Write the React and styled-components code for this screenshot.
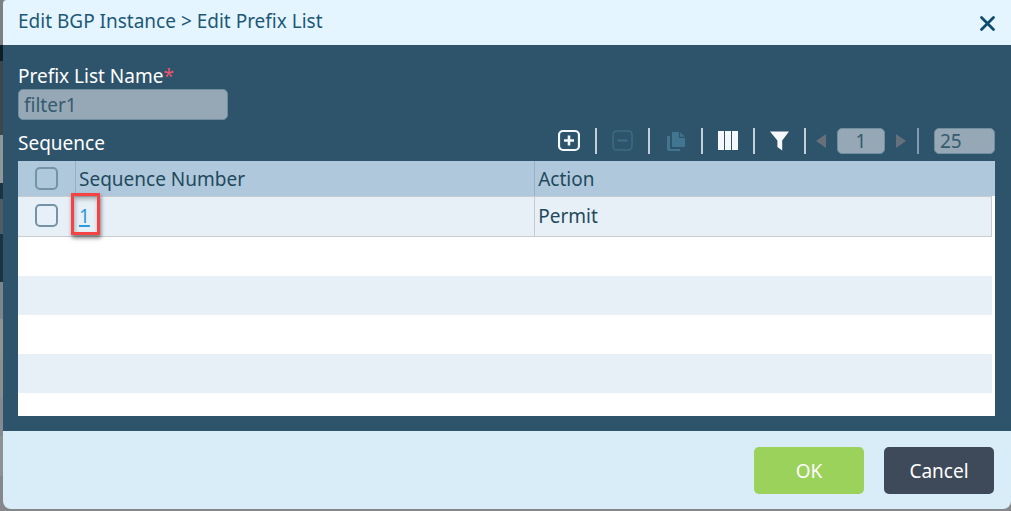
import React, { useState } from 'react';
import styled, { createGlobalStyle, css } from 'styled-components';

const EMPTY_ROWS = ['a', 'b', 'c', 'd'];

const sequences = [{ id: 1, action: 'Permit' }];

// slices of the dimmed page that show beside the dialog
const backdropSlices = [
  { size: 45, color: '#7d8083' },
  { size: 16, color: '#0e1e26' },
  { size: 75, color: '#3e464c' },
  { size: 48, color: '#8f979b' },
  { size: 16, color: '#1c3441' },
  { size: 35, color: '#4f5c66' },
  { size: 48, color: '#1c3441' },
  { size: 37, color: '#7b858b' },
  { size: 40, color: '#909294' },
  { size: 40, color: '#8b8d8f' },
  { size: 38, color: '#858a92' },
  { size: 40, color: '#8e9093' },
  { size: 33, color: '#85878c' },
];

function App() {
  const [name, setName] = useState('filter1');
  const [page, setPage] = useState('1');
  const [pageSize, setPageSize] = useState('25');

  return (
    <>
      <GlobalStyle />
      <Page>
        <Backdrop aria-hidden="true">
          {backdropSlices.map((slice, i) => (
            <Slice key={i} $size={slice.size} $color={slice.color} />
          ))}
        </Backdrop>
        <Dialog role="dialog" aria-labelledby="dialog-title">
          <Header>
            <Title id="dialog-title">Edit BGP Instance &gt; Edit Prefix List</Title>
            <CloseButton type="button" aria-label="Close">
              <svg width="17" height="17" viewBox="0 0 17 17">
                <path d="M2.5 2.5L14.5 14.5M14.5 2.5L2.5 14.5" stroke="#0d4a6b" strokeWidth="2.8" strokeLinecap="round" />
              </svg>
            </CloseButton>
          </Header>

          <Body>
            <Label htmlFor="prefix-name">
              Prefix List Name<Required>*</Required>
            </Label>
            <NameInput id="prefix-name" value={name} onChange={(e) => setName(e.target.value)} />

            <SequenceBar>
              <SectionTitle id="sequence-title">Sequence</SectionTitle>
              <Toolbar>
                <IconButton type="button" aria-label="Add">
                  <svg width="22" height="24" viewBox="0 0 22 24" fill="none" stroke="#f2f8fb">
                    <rect x="1" y="2" width="20" height="19" rx="4" strokeWidth="2.2" />
                    <path d="M11 6.5V16.5M6 11.5H16" strokeWidth="2.6" />
                  </svg>
                </IconButton>
                <Separator />
                <IconButton type="button" aria-label="Remove" disabled>
                  <svg width="21" height="24" viewBox="0 0 21 24" fill="none" stroke="#3c6b84">
                    <rect x="1" y="2" width="19" height="19" rx="4" strokeWidth="1.6" />
                    <path d="M5.5 11.5H15.5" strokeWidth="2.2" />
                  </svg>
                </IconButton>
                <Separator />
                <IconButton type="button" aria-label="Copy" disabled>
                  <svg width="21" height="24" viewBox="0 0 21 24" fill="#42758f">
                    <path d="M8 3H14V9H20V17Q20 18 19 18H8Q7 18 7 17V4Q7 3 8 3Z" />
                    <path d="M15.2 3.2L19.8 7.8H15.2Z" />
                    <path d="M3 7H5V20H15V22H4Q2 22 2 20V8Q2 7 3 7Z" />
                  </svg>
                </IconButton>
                <Separator />
                <IconButton type="button" aria-label="Columns">
                  <svg width="20" height="22" viewBox="0 0 20 22" fill="#f4f8fb">
                    <rect x="0" y="1" width="6" height="19" />
                    <rect x="7" y="1" width="6" height="19" />
                    <rect x="14" y="1" width="6" height="19" />
                  </svg>
                </IconButton>
                <Separator />
                <IconButton type="button" aria-label="Filter">
                  <svg width="19" height="22" viewBox="0 0 19 22" fill="#f6fafc">
                    <path d="M0 1.5H19L12.2 10.5V20.5L7.4 17V10.5Z" />
                  </svg>
                </IconButton>
                <Separator />
                <Pager>
                  <IconButton type="button" aria-label="Previous page" disabled>
                    <svg width="10" height="16" viewBox="0 0 10 16" fill="#66707a">
                      <path d="M10 1V15L0 8Z" />
                    </svg>
                  </IconButton>
                  <PageInput aria-label="Page" value={page} onChange={(e) => setPage(e.target.value)} />
                  <IconButton type="button" aria-label="Next page" disabled>
                    <svg width="10" height="16" viewBox="0 0 10 16" fill="#66707a">
                      <path d="M0 1V15L10 8Z" />
                    </svg>
                  </IconButton>
                </Pager>
                <Separator $dim />
                <SizeInput aria-label="Rows per page" value={pageSize} onChange={(e) => setPageSize(e.target.value)} />
              </Toolbar>
            </SequenceBar>

            <Grid>
              <Table aria-labelledby="sequence-title">
                <colgroup>
                  <CheckCol />
                  <NumberCol />
                  <col />
                  <GutterCol />
                </colgroup>
                <thead>
                  <tr>
                    <HeadCell>
                      <Checkbox type="checkbox" aria-label="Select all" />
                    </HeadCell>
                    <HeadCell>Sequence Number</HeadCell>
                    <HeadCell>Action</HeadCell>
                    <HeadCell aria-hidden="true" />
                  </tr>
                </thead>
                <tbody>
                  {sequences.map((row) => (
                    <tr key={row.id}>
                      <Cell>
                        <Checkbox type="checkbox" aria-label={`Select sequence ${row.id}`} />
                      </Cell>
                      <Cell>
                        <NumberLink href="#sequence">
                          {row.id}
                          <Highlight />
                        </NumberLink>
                      </Cell>
                      <Cell>{row.action}</Cell>
                      <Gutter />
                    </tr>
                  ))}
                  {EMPTY_ROWS.map((key) => (
                    <EmptyRow key={key} aria-hidden="true">
                      <td colSpan={3} />
                      <Gutter />
                    </EmptyRow>
                  ))}
                </tbody>
              </Table>
            </Grid>
          </Body>

          <Footer>
            <ActionButton type="button" $primary>OK</ActionButton>
            <ActionButton type="button">Cancel</ActionButton>
          </Footer>
        </Dialog>
      </Page>
    </>
  );
}
export default App;

const GlobalStyle = createGlobalStyle`
  * {
    box-sizing: border-box;
  }
  body {
    margin: 0;
    background: #85878a;
    color: #1f4a5c;
    font-family: "Noto Sans", "Open Sans", sans-serif;
    font-size: 19px;
    line-height: 26px;
  }
  input, button {
    font: inherit;
  }
`;

const Page = styled.div`
  display: flex;
  padding-bottom: 2px;
`;

const Backdrop = styled.div`
  display: flex;
  flex-direction: column;
  width: 3px;
`;

const Slice = styled.div`
  flex: ${({ $size }) => $size} 0 0;
  background: ${({ $color }) => $color};
`;

const Dialog = styled.div`
  flex: 1;
  min-width: 0;
  border-radius: 4px 0 8px 8px;
  overflow: hidden;
`;

const Header = styled.header`
  display: flex;
  align-items: center;
  justify-content: space-between;
  height: 45px;
  padding: 0 15px 4px;
  background: #e5f5ff;
`;

const Title = styled.h1`
  margin: 0;
  color: #1d5876;
  font-size: 19px;
  font-weight: 400;
`;

const CloseButton = styled.button`
  display: flex;
  margin-top: 6px;
  padding: 0;
  border: none;
  background: none;
  cursor: pointer;
`;

const Body = styled.main`
  padding: 18px 16px 15px 15px;
  background: #2e546b;
`;

const Label = styled.label`
  display: block;
  color: #fff;
`;

const Required = styled.span`
  color: #f0536b;
`;

const fieldStyle = css`
  border: 1px solid #6f8ea0;
  border-radius: 5px;
  background: #96a8b5;
  color: #355b6e;
`;

const NameInput = styled.input`
  display: block;
  width: 210px;
  height: 31px;
  padding: 0 5px;
  ${fieldStyle}
`;

const SequenceBar = styled.div`
  display: flex;
  justify-content: space-between;
  align-items: center;
  height: 41px;
`;

const SectionTitle = styled.h2`
  margin: 4px 0 0;
  color: #fff;
  font-size: 19px;
  font-weight: 400;
`;

const Toolbar = styled.div`
  display: flex;
  align-items: center;
  gap: 15px;
`;

const IconButton = styled.button`
  display: flex;
  padding: 0;
  border: none;
  background: none;
  cursor: ${({ disabled }) => (disabled ? 'default' : 'pointer')};
`;

const Separator = styled.span`
  width: 2px;
  height: 26px;
  background: ${({ $dim }) => ($dim ? '#7f9bad' : '#c3ced6')};
`;

const Pager = styled.div`
  display: flex;
  align-items: center;
  gap: 11px;
  margin: 0 -4px 0 -5px;
`;

const PageInput = styled.input`
  width: 48px;
  height: 26px;
  padding: 0;
  text-align: center;
  ${fieldStyle}
`;

const SizeInput = styled.input`
  width: 61px;
  height: 26px;
  padding: 0 5px;
  ${fieldStyle}
`;

const Grid = styled.div`
  height: 255px;
  overflow: hidden;
  background: #fff;
`;

const Table = styled.table`
  width: 100%;
  table-layout: fixed;
  border-collapse: separate;
  border-spacing: 0;
`;

const CheckCol = styled.col`
  width: 58px;
`;

const NumberCol = styled.col`
  width: 47%;
`;

const GutterCol = styled.col`
  width: 3px;
`;

const HeadCell = styled.th`
  height: 35px;
  padding: 0 3px;
  border-right: 1px solid #96b1c5;
  background: #b0c8dc;
  font-weight: 400;
  text-align: left;

  &:nth-child(n + 3) {
    padding-right: 0;
    border-right: none;
  }
`;

const Cell = styled.td`
  height: 41px;
  padding: 0 3px 2px;
  border: 1px solid #c8cccf;
  border-left: none;
  background: #e7eff7;

  &:first-child {
    border-right-color: #e7eff7;
  }
`;

const Gutter = styled.td`
  padding: 0;
  background: #fff;
`;

const EmptyRow = styled.tr`
  height: 39px;
  background: #fff;

  &:nth-child(odd) {
    background: #e7eff7;
  }
`;

const Checkbox = styled.input`
  appearance: none;
  display: block;
  width: 23px;
  height: 23px;
  margin: 0 0 0 14px;
  border: 2px solid #7593a6;
  border-radius: 5px;
  background: transparent;

  &:checked {
    background: #7593a6;
  }
`;

const NumberLink = styled.a`
  position: relative;
  color: #2a9bdc;
  text-decoration-thickness: 2px;
  text-underline-offset: 2px;
`;

// red frame round the first sequence number
const Highlight = styled.span`
  position: absolute;
  top: -10px;
  left: -8px;
  width: 29px;
  height: 42px;
  border: 3px solid #f54343;
  box-shadow: 1px 3px 4px rgba(0, 0, 0, 0.5), inset 1px 3px 4px rgba(0, 0, 0, 0.3);
  pointer-events: none;
`;

const Footer = styled.footer`
  display: flex;
  justify-content: flex-end;
  gap: 20px;
  padding: 16px 17px 15px;
  background: #d8edf8;
`;

const ActionButton = styled.button`
  width: 110px;
  height: 47px;
  border: none;
  border-radius: 5px;
  background: ${({ $primary }) => ($primary ? '#9bd25c' : '#3e495a')};
  color: #fff;
  cursor: pointer;
`;
